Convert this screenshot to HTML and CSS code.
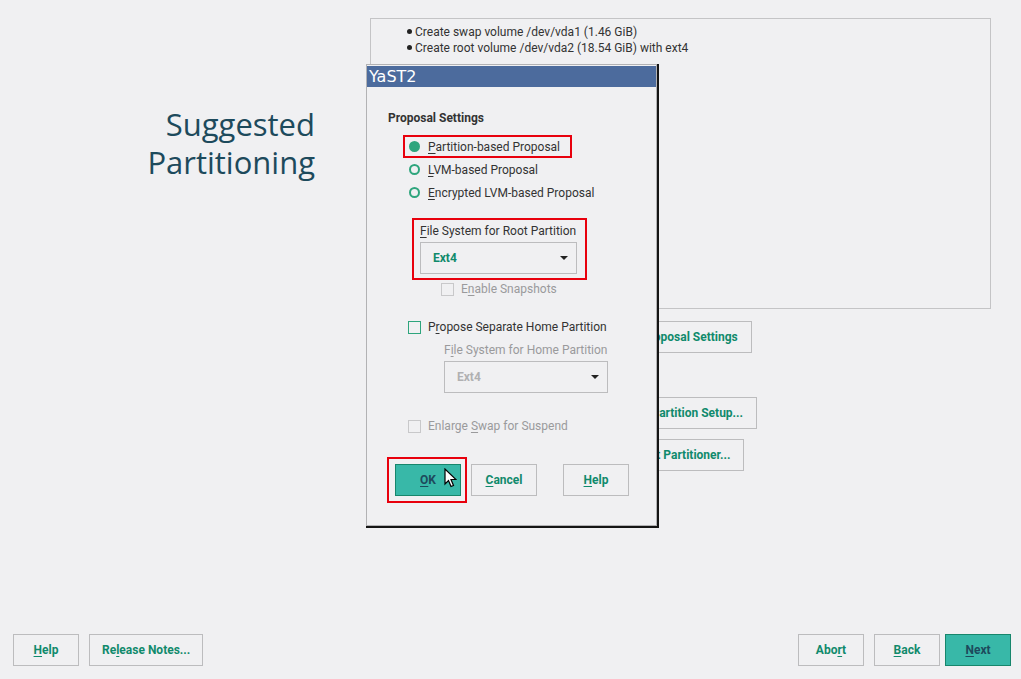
FILE: index.html
```html
<!DOCTYPE html>
<html>
<head>
<meta charset="utf-8">
<link rel="stylesheet" href="styles.css">
</head>
<body>
<div class="screen">
  <div class="main">
    <div class="side">
      <h1 class="title"><span class="tline">Suggested</span><span class="tline">Partitioning</span></h1>
    </div>
    <div class="content">
      <div class="summary">
        <ul class="changes">
          <li>Create swap volume /dev/vda1 (1.46 GiB)</li>
          <li>Create root volume /dev/vda2 (18.54 GiB) with ext4</li>
        </ul>
      </div>
      <div class="actions">
        <button class="btn">Edit Proposal Settings</button>
        <button class="btn gap-big">Create Partition Setup...</button>
        <button class="btn gap-small">Expert Partitioner...</button>
      </div>
    </div>
  </div>
  <div class="footer">
    <div class="group">
      <button class="btn wide"><u>H</u>elp</button>
      <button class="btn wide">Re<u>l</u>ease Notes...</button>
    </div>
    <div class="group">
      <button class="btn wide">Abo<u>r</u>t</button>
      <button class="btn wide"><u>B</u>ack</button>
      <button class="btn wide primary"><u>N</u>ext</button>
    </div>
  </div>

  <div class="dialog">
    <div class="titlebar">YaST2</div>
    <div class="dbody">
      <div class="heading">Proposal Settings</div>
      <div class="radios">
        <div class="radio mark"><span class="dot on"></span><span><u>P</u>artition-based Proposal</span></div>
        <div class="radio"><span class="dot"></span><span><u>L</u>VM-based Proposal</span></div>
        <div class="radio"><span class="dot"></span><span><u>E</u>ncrypted LVM-based Proposal</span></div>
      </div>
      <div class="fsbox">
        <div class="label"><u>F</u>ile System for Root Partition</div>
        <div class="combo root"><span>Ext4</span><span class="arrow"></span></div>
      </div>
      <div class="check snap disabled"><span class="box"></span><span>E<u>n</u>able Snapshots</span></div>
      <div class="check home"><span class="box green"></span><span>P<u>r</u>opose Separate Home Partition</span></div>
      <div class="label homelabel disabled">F<u>i</u>le System for Home Partition</div>
      <div class="combo homecombo disabled"><span>Ext4</span><span class="arrow"></span></div>
      <div class="check swap disabled"><span class="box"></span><span>Enlarge <u>S</u>wap for Suspend</span></div>
      <div class="dbuttons">
        <div class="okmark"><button class="btn wide primary"><u>O</u>K</button></div>
        <button class="btn wide cancel"><u>C</u>ancel</button>
        <button class="btn wide help"><u>H</u>elp</button>
      </div>
    </div>
  </div>

  <svg class="cursor" width="13" height="20" viewBox="0 0 13 20">
    <path d="M1 1 L1 16 L4.5 12.5 L7 18.5 L9.5 17.5 L7 11.5 L12 11.5 Z" fill="#fff" stroke="#000" stroke-width="1.2" stroke-linejoin="miter"/>
  </svg>
</div>
</body>
</html>
```

FILE: styles.css
```css
* { box-sizing: border-box; }
html, body { margin: 0; padding: 0; }
body {
  background: #f0f0f2;
  font-family: Roboto, "Noto Sans", sans-serif;
  font-size: 12px;
  color: #333;
}
.screen {
  position: relative;
  width: 1021px;
  height: 679px;
  display: flex;
  flex-direction: column;
}
.main {
  display: flex;
  padding-top: 18px;
  flex: 1;
}
.side {
  width: 370px;
  padding-right: 55px;
  padding-top: 87px;
  text-align: right;
}
.title {
  margin: 0;
  font-family: "Open Sans", Lato, sans-serif;
  font-weight: 400;
  font-size: 31px;
  color: #1d4a5c;
}
.tline {
  display: block;
  height: 38px;
  line-height: 38px;
}
.content {
  width: 621px;
  display: flex;
  flex-direction: column;
  align-items: center;
}
.summary {
  width: 621px;
  height: 291px;
  border: 1px solid #c4c4c6;
}
.changes {
  list-style: none;
  margin: 0;
  padding: 5px 0 0 36px;
  font-size: 12px;
}
.changes li {
  line-height: 16px;
}
.changes li::before {
  content: "";
  display: inline-block;
  width: 5px;
  height: 5px;
  border-radius: 50%;
  background: #222;
  margin-right: 3px;
  vertical-align: 2px;
}
.actions {
  display: flex;
  flex-direction: column;
  align-items: center;
  padding-top: 12px;
  padding-right: 5px;
}
.gap-big { margin-top: 44px; }
.gap-small { margin-top: 10px; }

.btn {
  height: 32px;
  padding: 0 13px;
  border: 1px solid #bcbcbe;
  background: #f0f0f2;
  font-family: Roboto, "Noto Sans", sans-serif;
  font-weight: bold;
  font-size: 12px;
  color: #108a6c;
  line-height: 30px;
}
.btn u, .radio u, .check u, .label u {
  text-underline-offset: 2px;
}
.btn.wide { min-width: 66px; padding: 0 12px; }
.btn.primary {
  background: #38b8a8;
  border-color: #17866c;
  color: #1d4a5c;
}

.footer {
  display: flex;
  justify-content: space-between;
  padding: 0 10px 13px 13px;
}
.group { display: flex; gap: 10px; }
.group .primary { margin-left: -5px; }

/* dialog */
.dialog {
  position: absolute;
  left: 366px;
  top: 64px;
  width: 291px;
  height: 462px;
  background: #f0f0f2;
  border: 1px solid #b2b2b4;
  box-shadow: 2px 0 0 #151515, 0 2px 0 #151515, 2px 2px 0 #151515;
}
.titlebar {
  height: 21px;
  margin-top: 1px;
  background: #4c6b9d;
  color: #fff;
  font-family: "DejaVu Sans", sans-serif;
  font-size: 16px;
  line-height: 21px;
  padding-left: 2px;
}
.dbody {
  padding: 0 0 0 21px;
  display: flex;
  flex-direction: column;
  align-items: flex-start;
}
.heading {
  margin-top: 23px;
  font-weight: bold;
  line-height: 16px;
}
.radios {
  margin-top: 9px;
  margin-left: 15px;
  display: flex;
  flex-direction: column;
  align-items: flex-start;
}
.radio {
  display: flex;
  align-items: center;
  height: 23px;
  border: 2px solid transparent;
  padding-left: 4px;
  padding-right: 10px;
}
.radio.mark { border-color: #e8000d; }
.dot {
  width: 11px;
  height: 11px;
  border: 2px solid #2ea57d;
  border-radius: 50%;
  margin-right: 8px;
}
.dot.on { background: #2ea57d; }

.fsbox {
  margin-top: 14px;
  margin-left: 24px;
  border: 2px solid #e8000d;
  padding: 3px 8px 4px 6px;
}
.label { line-height: 16px; }
.combo {
  margin-top: 3px;
  height: 32px;
  border: 1px solid #bcbcbe;
  display: flex;
  align-items: center;
  justify-content: space-between;
  padding: 0 8px 0 12px;
  font-weight: bold;
  color: #108a6c;
}
.combo.root { width: 157px; }
.arrow {
  width: 0;
  height: 0;
  border-left: 4px solid transparent;
  border-right: 4px solid transparent;
  border-top: 4px solid #222;
}
.disabled { color: #9a9a9c; }
.combo.disabled { color: #b0b0b2; }
.combo.disabled .arrow { border-top-color: #222; }

.check {
  display: flex;
  align-items: center;
  line-height: 16px;
}
.box {
  width: 13px;
  height: 13px;
  border: 1px solid #c8c8ca;
  margin-right: 7px;
}
.box.green { border-color: #2ea57d; }
.check.snap { margin-top: 1px; margin-left: 53px; }
.check.home { margin-top: 22px; margin-left: 20px; }
.homelabel { margin-top: 7px; margin-left: 56px; }
.homecombo { margin-top: 3px; margin-left: 56px; width: 164px; }
.check.swap { margin-top: 25px; margin-left: 20px; }

.dbuttons {
  margin-top: 23px;
  margin-left: -1px;
  display: flex;
  align-items: flex-start;
}
.okmark {
  border: 2px solid #e8000d;
  padding: 5px 4px 5px 6px;
}
.okmark .btn { display: block; }
.cancel { margin-top: 7px; margin-left: 4px; }
.help { margin-top: 7px; margin-left: 26px; }

.cursor {
  position: absolute;
  left: 444px;
  top: 468px;
}
```
